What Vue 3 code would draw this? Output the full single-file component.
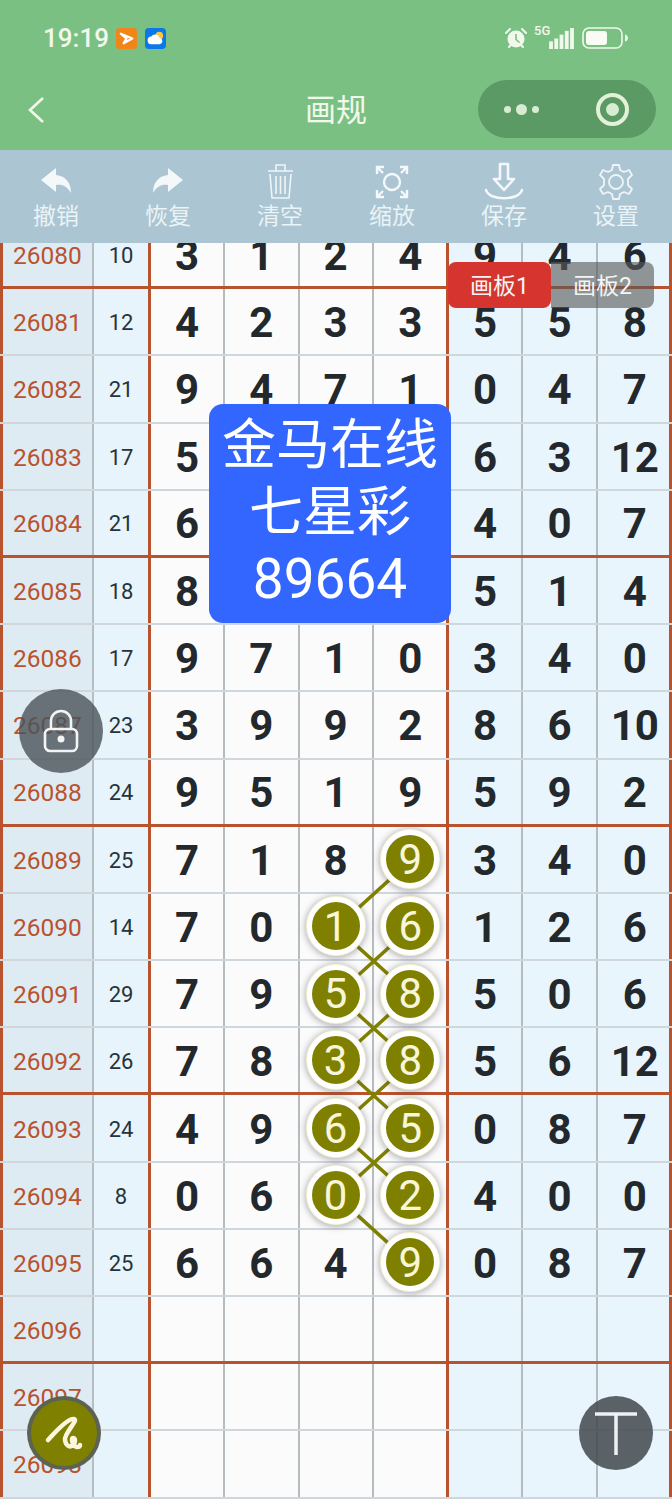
<script setup>
const tools = [
  { label: '撤销', icon: 'undo' },
  { label: '恢复', icon: 'redo' },
  { label: '清空', icon: 'trash' },
  { label: '缩放', icon: 'zoom' },
  { label: '保存', icon: 'save' },
  { label: '设置', icon: 'gear' },
]

// draw numbers per period, 'b' marks a circled digit
const rows = [
  [26080, 10, '3 1 2 4 9 4 6'],
  [26081, 12, '4 2 3 3 5 5 8'],
  [26082, 21, '9 4 7 1 0 4 7'],
  [26083, 17, '5 - - - 6 3 12'],
  [26084, 21, '6 - - - 4 0 7'],
  [26085, 18, '8 - - - 5 1 4'],
  [26086, 17, '9 7 1 0 3 4 0'],
  [26087, 23, '3 9 9 2 8 6 10'],
  [26088, 24, '9 5 1 9 5 9 2'],
  [26089, 25, '7 1 8 9b 3 4 0'],
  [26090, 14, '7 0 1b 6b 1 2 6'],
  [26091, 29, '7 9 5b 8b 5 0 6'],
  [26092, 26, '7 8 3b 8b 5 6 12'],
  [26093, 24, '4 9 6b 5b 0 8 7'],
  [26094, 8, '0 6 0b 2b 4 0 0'],
  [26095, 25, '6 6 4 9b 0 8 7'],
  [26096, '', ''],
  [26097, '', ''],
  [26098, '', ''],
].map(([period, sum, nums]) => ({
  period,
  sum,
  cells: nums
    ? nums.split(' ').map((v) => ({
        text: v === '-' ? '' : v.replace('b', ''),
        ball: v.endsWith('b'),
      }))
    : Array.from({ length: 7 }, () => ({ text: '', ball: false })),
}))

const ROW_H = 67.2
const COL_X = 151
const COL_W = 74.25

// strokes between circled digits: [row, col] to [row, col]
const links = [
  [9, 3, 10, 2],
  [10, 2, 11, 3],
  [10, 3, 11, 2],
  [11, 2, 12, 3],
  [11, 3, 12, 2],
  [12, 2, 13, 3],
  [12, 3, 13, 2],
  [13, 2, 14, 3],
  [13, 3, 14, 2],
  [14, 2, 15, 3],
].map(([r1, c1, r2, c2]) => ({
  x1: COL_X + COL_W * (c1 + 0.5),
  y1: ROW_H * (r1 + 0.5),
  x2: COL_X + COL_W * (c2 + 0.5),
  y2: ROW_H * (r2 + 0.5),
}))
</script>

<template>
  <div class="page">
    <header class="top">
      <div class="status">
        <span class="time">19:19</span>
        <svg class="app-icon" viewBox="0 0 22 22">
          <rect width="22" height="22" rx="4" fill="#f0861a" />
          <path d="M5 6l12 5-9 5 3-5z" fill="none" stroke="#fff" stroke-width="2.4" stroke-linejoin="round" />
        </svg>
        <svg class="app-icon" viewBox="0 0 22 22">
          <rect width="22" height="22" rx="4" fill="#0a78e8" />
          <circle cx="15" cy="8" r="4" fill="#ffc83c" />
          <path d="M7 17a4 4 0 0 1-.5-8 5 5 0 0 1 9 1.500 3.300 3.300 0 0 1 0 6.500z" fill="#fff" />
        </svg>
        <div class="status-right">
          <svg class="alarm" viewBox="0 0 24 24">
            <circle cx="12" cy="13" r="8.500" fill="#f1f8ec" />
            <path d="M12 8v5.500l3.500 3" fill="none" stroke="#7bc083" stroke-width="1.600" />
            <path d="M2 7l4-4M22 7l-4-4M5 21l2-2M19 21l-2-2" stroke="#f1f8ec" stroke-width="2" stroke-linecap="round" />
          </svg>
          <span class="net">5G</span>
          <svg class="bars" viewBox="0 0 26 22">
            <rect x="0" y="14" width="4" height="8" fill="#f1f8ec" />
            <rect x="5.500" y="11" width="4" height="11" fill="#f1f8ec" />
            <rect x="11" y="7" width="4" height="15" fill="#f1f8ec" />
            <rect x="16.500" y="3" width="4" height="19" fill="#f1f8ec" />
            <rect x="22" y="0" width="4" height="22" fill="#f1f8ec" />
          </svg>
          <svg class="battery" viewBox="0 0 46 22">
            <rect x="1" y="1" width="39" height="20" rx="6" fill="none" stroke="#f1f8ec" stroke-width="1.600" />
            <rect x="4" y="4" width="21" height="14" rx="3" fill="#f8fcf4" />
            <path d="M43 7.500c2 .5 3 2 3 3.500s-1 3-3 3.500z" fill="#f1f8ec" />
          </svg>
        </div>
      </div>
      <div class="nav">
        <svg class="chevron" viewBox="0 0 18 28">
          <path d="M16 2L3 14l13 12" fill="none" stroke="#f1f8e8" stroke-width="2.600" />
        </svg>
        <h1 class="title">画规</h1>
        <div class="capsule">
          <div class="dots">
            <i></i>
            <i class="mid"></i>
            <i></i>
          </div>
          <div class="target"><i></i></div>
        </div>
      </div>
    </header>

    <nav class="toolbar">
      <div v-for="t in tools" :key="t.label" class="tool">
        <svg class="tool-icon" viewBox="0 0 40 40">
          <g v-if="t.icon === 'undo'">
            <path d="M20 6L5 18l15 12v-7c6-1 11 1 15 8 0-10-5-17-15-18z" fill="#f4f8fa" />
          </g>
          <g v-else-if="t.icon === 'redo'">
            <path d="M20 6l15 12-15 12v-7c-6-1-11 1-15 8 0-10 5-17 15-18z" fill="#f4f8fa" />
          </g>
          <g v-else-if="t.icon === 'trash'" fill="none" stroke="#eef5f8" stroke-width="1.600">
            <path d="M8 9h25M16 9V3h9v6M10 12l2 24h17l2-24M16 14v18M20.500 14v18M25 14v18" />
          </g>
          <g v-else-if="t.icon === 'zoom'" fill="none" stroke="#f4f8fa" stroke-width="2.400">
            <circle cx="20" cy="20" r="8" />
            <path d="M12 5H5v7M5 5l6 6M28 5h7v7M35 5l-6 6M12 35H5v-7M5 35l6-6M28 35h7v-7M35 35l-6-6" />
          </g>
          <g v-else-if="t.icon === 'save'" fill="none" stroke="#f4f8fa" stroke-width="2.600">
            <path d="M16 2h8v15h6L20 28 10 17h6z" stroke-linejoin="round" />
            <path d="M2 28c3 11 33 11 36 0" stroke-linecap="round" />
          </g>
          <g v-else fill="none" stroke="#eef5f8" stroke-width="1.800" stroke-linejoin="round">
            <circle cx="20" cy="20" r="7" />
            <path d="M17 3h6l1 5 4 2 5-2 3 5-4 4v6l4 4-3 5-5-2-4 2-1 5h-6l-1-5-4-2-5 2-3-5 4-4v-6l-4-4 3-5 5 2 4-2z" />
          </g>
        </svg>
        <span class="tool-label">{{ t.label }}</span>
      </div>
    </nav>

    <main class="board">
      <div class="sheet">
        <div
          v-for="(row, i) in rows"
          :key="row.period"
          class="row"
          :class="{ heavy: i % 4 === 0 }"
        >
          <div class="period">{{ row.period }}</div>
          <div class="sum">{{ row.sum }}</div>
          <div
            v-for="(cell, c) in row.cells"
            :key="c"
            class="cell"
            :class="{ tail: c > 3, edge: c === 3, last: c === 6 }"
          >
            <span v-if="cell.ball" class="ball">{{ cell.text }}</span>
            <template v-else>{{ cell.text }}</template>
          </div>
        </div>
        <svg class="links" width="672" height="1300">
          <line
            v-for="(l, i) in links"
            :key="i"
            :x1="l.x1"
            :y1="l.y1"
            :x2="l.x2"
            :y2="l.y2"
          />
        </svg>
      </div>

      <div class="boards">
        <span class="board-tab on">画板1</span>
        <span class="board-tab">画板2</span>
      </div>

      <div class="promo">
        <div>金马在线</div>
        <div>七星彩</div>
        <div class="promo-num">89664</div>
      </div>

      <button class="fab lock">
        <svg viewBox="0 0 36 44" width="36" height="44">
          <path d="M8 20v-8a10 10 0 0 1 20 0v8" fill="none" stroke="#f2f4f5" stroke-width="2.600" />
          <rect x="2" y="20" width="32" height="22" rx="5" fill="none" stroke="#f2f4f5" stroke-width="2.600" />
          <circle cx="18" cy="30" r="3.500" fill="#f2f4f5" />
        </svg>
      </button>

      <button class="fab pen">
        <svg viewBox="0 0 40 36" width="40" height="36">
          <path d="M4 25C12 16 24 3 30 4C35 5 20 18 21 25C22 32 27 33 30 29C32 26 31 23 29 23C27 23 28 31 33 32C35 32 36 31 36 30" fill="none" stroke="#fbf6dc" stroke-width="4.500" stroke-linecap="round" stroke-linejoin="round" />
        </svg>
      </button>

      <button class="fab text">
        <svg viewBox="0 0 44 44" width="44" height="44">
          <path d="M1 3h42M22 3v41" fill="none" stroke="#eef1f2" stroke-width="3.500" />
        </svg>
      </button>
    </main>
  </div>
</template>

<style>
html,
body {
  margin: 0;
  background: #fff;
}
</style>

<style scoped>
.page {
  position: relative;
  width: 672px;
  height: 1500px;
  overflow: hidden;
  display: flex;
  flex-direction: column;
  font-family: Roboto, "Noto Sans CJK SC", sans-serif;
}

/* Header */
.top {
  height: 150px;
  flex-shrink: 0;
  background: #7bc083;
  color: #f1f8ec;
}

.status {
  height: 76px;
  box-sizing: border-box;
  display: flex;
  align-items: center;
  padding: 0 44px 0 43px;
}

.time {
  font-size: 26px;
  font-weight: 500;
  margin-right: 7px;
}

.app-icon {
  width: 21px;
  height: 21px;
  margin-right: 8px;
}

.status-right {
  margin-left: auto;
  display: flex;
  align-items: center;
}

.alarm {
  width: 24px;
  height: 24px;
  margin-right: 6px;
}

.net {
  font-size: 13px;
  font-weight: 500;
  align-self: flex-start;
  margin-top: -3px;
  width: 15px;
}

.bars {
  width: 25px;
  height: 21px;
  margin-right: 8px;
}

.battery {
  width: 46px;
  height: 22px;
}

.nav {
  height: 74px;
  position: relative;
  display: flex;
  align-items: center;
  justify-content: center;
}

.chevron {
  position: absolute;
  left: 27px;
  top: 20px;
  width: 18px;
  height: 28px;
}

.title {
  margin: 0 0 4px;
  font-size: 31px;
  font-weight: 400;
  line-height: 40px;
}

.capsule {
  position: absolute;
  left: 478px;
  top: 4px;
  width: 178px;
  height: 58px;
  border-radius: 29px;
  background: #5b9a65;
  display: flex;
  align-items: center;
}

.dots {
  display: flex;
  align-items: center;
  gap: 5px;
  margin-left: 26px;
}

.dots i {
  width: 7px;
  height: 7px;
  border-radius: 50%;
  background: #d9ecd2;
}

.dots i.mid {
  width: 11px;
  height: 11px;
}

.target {
  margin-left: auto;
  margin-right: 27px;
  width: 33px;
  height: 33px;
  box-sizing: border-box;
  border: 4px solid #e3f1d8;
  border-radius: 50%;
  display: flex;
  align-items: center;
  justify-content: center;
}

.target i {
  width: 13px;
  height: 13px;
  border-radius: 50%;
  background: #d9ecd2;
}

/* Toolbar */
.toolbar {
  height: 93px;
  flex-shrink: 0;
  display: flex;
  background: #abc5d3;
}

.tool {
  width: 112px;
  display: flex;
  flex-direction: column;
  align-items: center;
  padding-top: 12px;
  box-sizing: border-box;
}

.tool-icon {
  width: 40px;
  height: 40px;
}

.tool-label {
  font-size: 23px;
  line-height: 30px;
  color: #eaf3f6;
}

/* Number sheet */
.board {
  flex: 1;
  position: relative;
  overflow: hidden;
}

.sheet {
  position: relative;
  margin-top: -21px;
}

.row {
  display: grid;
  grid-template-columns: 94px 57px repeat(3, 74.25px) 75.25px repeat(3, 74.33px);
  height: 67.2px;
  box-sizing: border-box;
  border-bottom: 2px solid #cfd7dc;
}

.row.heavy {
  border-bottom: 3px solid #b8532e;
}

.period {
  box-sizing: border-box;
  display: flex;
  align-items: center;
  padding: 2px 0 0 10px;
  background: #dfebf3;
  border-left: 3px solid #b8532e;
  border-right: 2px solid #b4bfc5;
  color: #b8532e;
  font-size: 24.500px;
}

.sum {
  box-sizing: border-box;
  display: flex;
  align-items: center;
  justify-content: center;
  padding-top: 2px;
  background: #e7f4fc;
  border-right: 3px solid #b8532e;
  color: #27333a;
  font-size: 22px;
}

.cell {
  box-sizing: border-box;
  display: flex;
  align-items: center;
  justify-content: center;
  padding-top: 2px;
  background: #fbfbfb;
  border-right: 2px solid #b4bcc0;
  color: #23282c;
  font-size: 42px;
  font-weight: 700;
}

.cell.tail {
  background: #e8f5fd;
}

.cell.edge {
  border-right: 3px solid #b8532e;
  padding-left: 1px;
}

.cell.last {
  border-right: 3px solid #b8532e;
  padding-left: 3px;
}

.ball {
  position: relative;
  z-index: 2;
  flex-shrink: 0;
  width: 48px;
  height: 48px;
  margin-top: -2px;
  border-radius: 50%;
  background: #808000;
  border: 5px solid #fff;
  box-shadow: 0 0 0 1px #f4f3cf, 0 1px 6px 2px rgba(70, 70, 90, 0.4);
  display: flex;
  align-items: center;
  justify-content: center;
  color: #f8f6d8;
  font-size: 42px;
  font-weight: 400;
}

.links {
  position: absolute;
  left: 0;
  top: 0;
  z-index: 1;
  pointer-events: none;
}

.links line {
  stroke: #808000;
  stroke-width: 3.500px;
}

/* Floating pieces */
.boards {
  position: absolute;
  left: 448px;
  top: 19px;
  z-index: 3;
  display: flex;
}

.board-tab {
  width: 103px;
  height: 46px;
  box-sizing: border-box;
  padding-bottom: 3px;
  border-radius: 0 8px 8px 0;
  background: rgba(88, 88, 88, 0.62);
  color: #f4f4f4;
  font-size: 23px;
  display: flex;
  align-items: center;
  justify-content: center;
}

.board-tab.on {
  border-radius: 8px;
  background: #d5342f;
}

.promo {
  position: absolute;
  left: 209px;
  top: 161px;
  z-index: 3;
  width: 242px;
  height: 219px;
  box-sizing: border-box;
  padding-top: 8px;
  border-radius: 14px;
  background: #3366ff;
  color: #fff;
  font-size: 54px;
  line-height: 67px;
  text-align: center;
}

.promo-num {
  font-size: 55px;
}

.fab {
  position: absolute;
  z-index: 4;
  padding: 0;
  border: none;
  border-radius: 50%;
  display: flex;
  align-items: center;
  justify-content: center;
}

.lock {
  left: 19px;
  top: 446px;
  width: 84px;
  height: 84px;
  background: rgba(72, 82, 88, 0.8);
}

.pen {
  left: 27px;
  top: 1153px;
  width: 74px;
  height: 74px;
  box-sizing: border-box;
  background: #808000;
  border: 4px solid rgba(80, 90, 110, 0.75);
}

.text {
  left: 579px;
  top: 1153px;
  width: 74px;
  height: 74px;
  background: rgba(65, 72, 78, 0.85);
}
</style>
